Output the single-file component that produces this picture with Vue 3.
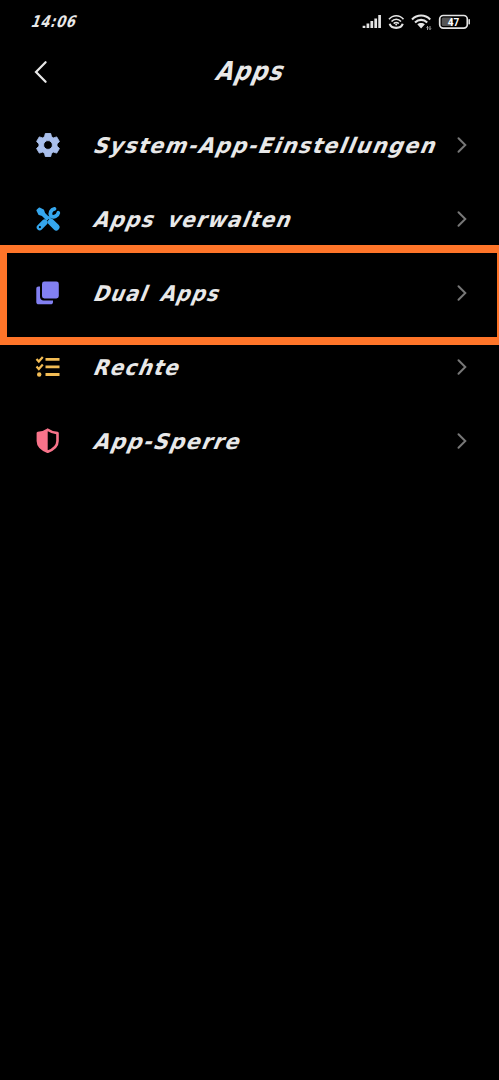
<script setup>
const items = [
  { id: 'gear', label: 'System-App-Einstellungen', length: 343 },
  { id: 'tools', label: 'Apps verwalten', length: 198 },
  { id: 'dual', label: 'Dual Apps', length: 126 },
  { id: 'list', label: 'Rechte', length: 86 },
  { id: 'shield', label: 'App-Sperre', length: 147 },
]
</script>

<template>
  <main class="screen">
    <header class="status">
      <svg class="clock" width="60" height="20" viewBox="0 0 60 20">
        <text transform="translate(0 16) skewX(-20)" textLength="45" lengthAdjust="spacingAndGlyphs">14:06</text>
      </svg>
      <svg width="112" height="20" viewBox="360 12 112 20" fill="none" stroke="#e4e4e4">
        <path d="M364 28v-2.200M367.900 28v-4.500M371.800 28v-7M375.700 28v-9.500M379.600 28V15" stroke-width="2.700" />
        <path d="M389 19.200c4-4.700 10.500-4.700 14.500 0M391.500 21.500c2.700-3 6.800-3 9.500 0M393.700 23.600c1.400-1.500 3.700-1.500 5.100 0" stroke-width="1.600" />
        <circle cx="396.200" cy="24.500" r="1" fill="#e4e4e4" stroke="none" />
        <path d="M389.700 23.800c1.500 5.400 11.500 5.400 13 0" stroke-width="2.200" />
        <path d="M412 19.400c5.200-5.200 13-5.200 18.200 0M415 22.500c3.500-3.500 8.700-3.500 12.200 0" stroke-width="2.100" />
        <path d="m417.300 24.300 3.800 4.200 3.800-4.200c-2.200-1.900-5.400-1.900-7.600 0Z" fill="#e4e4e4" stroke="none" />
        <path d="M427.500 30v-3.500m-1 1 1-1 1 1M430 26v3.500m-1-1 1 1 1-1" stroke-width=".7" />
        <rect x="439.700" y="15.500" width="27.600" height="12.600" rx="3.600" stroke-width="1.700" />
        <rect x="441.700" y="17.500" width="11" height="8.600" rx="1.500" fill="#555" stroke="none" />
        <path d="M469.200 19.800v4" stroke-width="1.500" stroke-linecap="round" />
        <text class="battery" x="453.500" y="25.600" text-anchor="middle">47</text>
      </svg>
    </header>

    <div class="title-bar">
      <svg class="back" width="16" height="24" viewBox="0 0 16 24">
        <path d="M13.600 2.200 4 12l9.600 9.800" />
      </svg>
      <svg class="heading" width="100" height="44" viewBox="0 0 100 44">
        <text transform="translate(13 30) skewX(-22)" textLength="68" lengthAdjust="spacingAndGlyphs">Apps</text>
      </svg>
    </div>

    <nav class="list">
      <div v-for="item in items" :key="item.id" class="row">
        <svg class="icon" width="26" height="26" viewBox="0 0 26 26">
          <g v-if="item.id === 'gear'" fill="#a9bfec">
            <path
              fill-rule="evenodd"
              stroke="#a9bfec"
              stroke-width=".9"
              stroke-linejoin="round"
              d="M10.300 1.500h5.400l.8 3.300 2 1.100 3.200-1 2.700 4.600-2.400 2.400v2.200l2.400 2.400-2.700 4.600-3.200-1-2 1.100-.8 3.300h-5.400l-.8-3.300-2-1.100-3.200 1-2.700-4.600L4 14.100v-2.200L1.600 9.500l2.700-4.600 3.200 1 2-1.100ZM13 8.600a4.400 4.400 0 1 0 0 8.800 4.400 4.400 0 0 0 0-8.800Z"
            />
          </g>
          <g v-else-if="item.id === 'tools'">
            <path d="M2.200 4.300 4.300 2.200l4 2 1 3.100 4.500 4.500-2 2-4.500-4.500-3.100-1Z" fill="#35a7ee" stroke="#35a7ee" stroke-width="1.600" stroke-linejoin="round" />
            <path d="m16 16 5.200 5.200" stroke="#35a7ee" stroke-width="6.600" stroke-linecap="round" />
            <path d="M4.700 21.300 9.600 16.400" stroke="#35a7ee" stroke-width="6" stroke-linecap="round" />
            <path d="m13.600 12.600 1.300-1.200" stroke="#35a7ee" stroke-width="3.600" />
            <path d="M19.500 2.800a5 5 0 0 0-3.500 7.400 5 5 0 0 0 7.300-3.400" fill="none" stroke="#35a7ee" stroke-width="3.800" stroke-linecap="round" />
            <circle cx="4.900" cy="21.100" r="1.100" fill="#000" />
          </g>
          <g v-else-if="item.id === 'dual'" fill="#8280f2">
            <path d="M3.500 6.500H5V17C5 18.900 6.600 20.500 8.500 20.500H18v1.500c0 1.400-.9 2.300-2.300 2.300H3.700c-1.500 0-2.400-.9-2.400-2.300V8.800C1.300 7.400 2.200 6.500 3.500 6.500Z" />
            <rect x="7" y="1.500" width="16.800" height="17" rx="2.400" />
          </g>
          <g v-else-if="item.id === 'list'" fill="none" stroke="#f3bd55" stroke-width="2.200">
            <path d="M10.500 5.300h14M10.500 12.900h14M10.500 20.500h14" stroke-width="2.800" />
            <path d="m1.500 5 2.300 2.500L7.800 3M1.500 12.500 3.800 15l4-4.500" />
            <circle cx="4.200" cy="20.500" r="2.200" fill="#f3bd55" stroke="none" />
          </g>
          <g v-else>
            <path d="M12.700 1.700c2.700 2 6 3 9.800 3.400v8c0 5-4.600 8.700-9.800 10.700-5.200-2-9.800-5.700-9.800-10.700v-8c3.800-.4 7.100-1.400 9.800-3.400Z" fill="none" stroke="#f8738a" stroke-width="2.600" stroke-linejoin="round" />
            <path d="M12.700 1.700v22.100c-5.200-2-9.800-5.700-9.800-10.700v-8c3.800-.4 7.100-1.400 9.800-3.400Z" fill="#f8738a" />
          </g>
        </svg>
        <svg class="label" width="360" height="36" viewBox="0 0 360 36">
          <text transform="translate(1 26) skewX(-22)" :textLength="item.length" lengthAdjust="spacingAndGlyphs">{{ item.label }}</text>
        </svg>
        <svg class="chevron" width="12" height="18" viewBox="0 0 12 18">
          <path d="m2.500 2.200 6.800 6.800-6.800 6.800" />
        </svg>
        <div v-if="item.id === 'dual'" class="highlight"></div>
      </div>
    </nav>
  </main>
</template>

<style>
body {
  background: #000;
}
</style>

<style scoped>
.screen {
  width: 499px;
  height: 1080px;
  overflow: hidden;
  background: #000;
}
svg {
  display: block;
  flex: none;
}
text {
  font-family: "DejaVu Sans", sans-serif;
  font-weight: bold;
  fill: #e8e8e8;
}
.status {
  display: flex;
  justify-content: space-between;
  height: 32px;
  padding: 12px 27px 0 30px;
  box-sizing: border-box;
}
.clock text {
  font-size: 16px;
  letter-spacing: 1px;
}
.clock {
  margin-top: -1px;
}
text.battery {
  font: bold 10px Roboto, sans-serif;
  stroke: none;
  fill: #fff;
}
.title-bar {
  display: grid;
  grid-template-columns: 1fr auto 1fr;
  align-items: center;
  height: 76px;
  padding: 4px 0 0 32px;
  margin-right: 30px;
  box-sizing: border-box;
}
.back path {
  fill: none;
  stroke: #e8e8e8;
  stroke-width: 2.2;
  stroke-linecap: round;
}
.heading text {
  font-size: 26px;
  letter-spacing: 1.5px;
}
.row {
  position: relative;
  display: flex;
  align-items: center;
  height: 74px;
  padding-left: 34.5px;
}
.label {
  margin-left: 30px;
}
.label text {
  font-size: 21.5px;
  letter-spacing: 1.5px;
  word-spacing: 5px;
}
.chevron {
  margin-left: 5px;
}
.chevron path {
  fill: none;
  stroke: #777;
  stroke-width: 2;
  stroke-linecap: round;
}
.highlight {
  position: absolute;
  z-index: 1;
  top: -11px;
  left: 0;
  right: 0;
  height: 100px;
  border: 8px solid #ff7529;
  border-left-width: 7px;
  border-right-width: 2px;
  box-sizing: border-box;
}
</style>
